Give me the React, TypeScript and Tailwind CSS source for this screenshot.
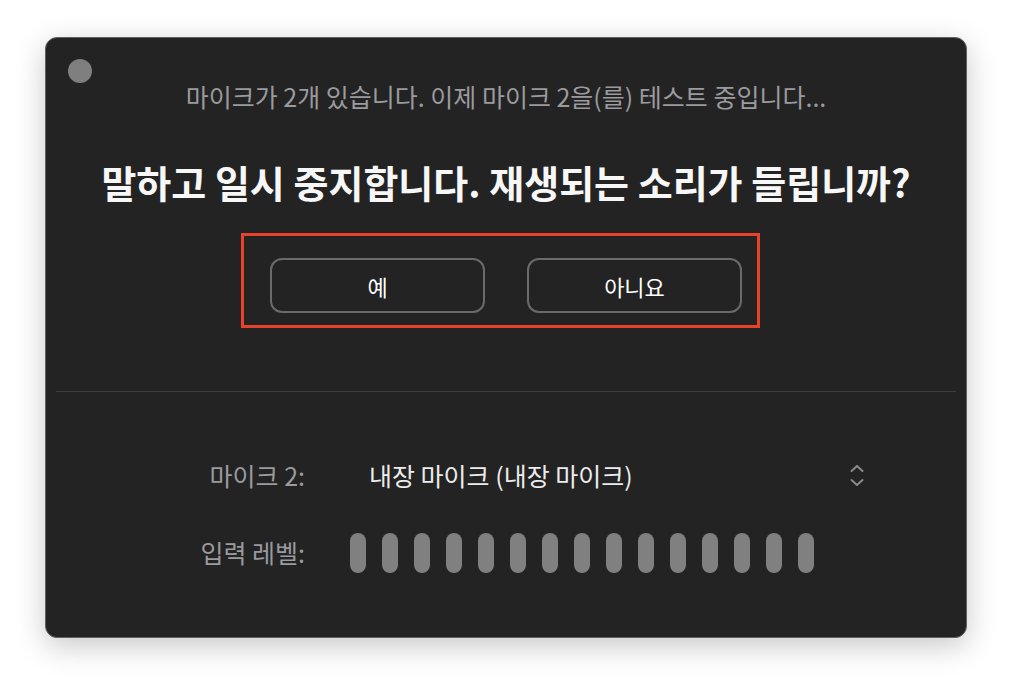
import React from "react";

const font = { fontFamily: '"Noto Sans CJK KR", "Noto Sans", sans-serif' };

export default function App() {
  const bars = Array.from({ length: 15 });
  return (
    <div className="w-[1012px] h-[692px] bg-white pl-[45px] pt-[37px]" style={font}>
      <div className="relative w-[922px] h-[601px] rounded-[12px] border border-[#606060] bg-[#232323] shadow-[0_8px_30px_rgba(0,0,0,0.22)] flex flex-col">
        <div className="absolute left-[22px] top-[21px] w-[24px] h-[24px] rounded-full bg-[#7f7f7f]" />
        <div className="pt-[44px] text-center text-[25px] leading-[28px] text-[#9a9a9f]">
          마이크가 2개 있습니다. 이제 마이크 2을(를) 테스트 중입니다...
        </div>
        <div className="mt-[54px] text-center text-[38px] leading-[36px] font-bold text-[#f7f7f7]">
          말하고 일시 중지합니다. 재생되는 소리가 들립니까?
        </div>
        <div className="relative mt-[33px] h-[95px] flex items-start justify-center gap-[42px] pt-[25px]">
          <div className="absolute left-[195px] top-0 w-[519px] h-[95px] border-[3px] border-[#e8412c]" />
          <button className="w-[215px] h-[55px] rounded-[12px] border-2 border-[#6a6a6a] text-white text-[22px] leading-none">
            예
          </button>
          <button className="w-[215px] h-[55px] rounded-[12px] border-2 border-[#6a6a6a] text-white text-[22px] leading-none">
            아니요
          </button>
        </div>
        <div className="mt-[63px] mx-[10px] h-[1px] bg-[#3c3c3c]" />
        <div className="mt-[66px] flex items-center h-[36px]">
          <div className="w-[259px] text-right text-[25px] text-[#9a9a9f]">마이크 2:</div>
          <div className="ml-[64px] text-[25px] text-[#ececec]">내장 마이크 (내장 마이크)</div>
          <svg className="ml-auto mr-[102px]" width="14" height="24" viewBox="0 0 14 24" fill="none" stroke="#8a8a8a" strokeWidth="2" strokeLinecap="round" strokeLinejoin="round">
            <path d="M1.5 7 L7 2 L12.5 7" />
            <path d="M1.5 16 L7 21 L12.5 16" />
          </svg>
        </div>
        <div className="mt-[39px] flex items-center">
          <div className="w-[259px] text-right text-[25px] text-[#9a9a9f]">입력 레벨:</div>
          <div className="ml-[45px] flex gap-[16px]">
            {bars.map((_, i) => (
              <div key={i} className="w-[16px] h-[40px] rounded-full bg-[#808080]" />
            ))}
          </div>
        </div>
      </div>
    </div>
  );
}
